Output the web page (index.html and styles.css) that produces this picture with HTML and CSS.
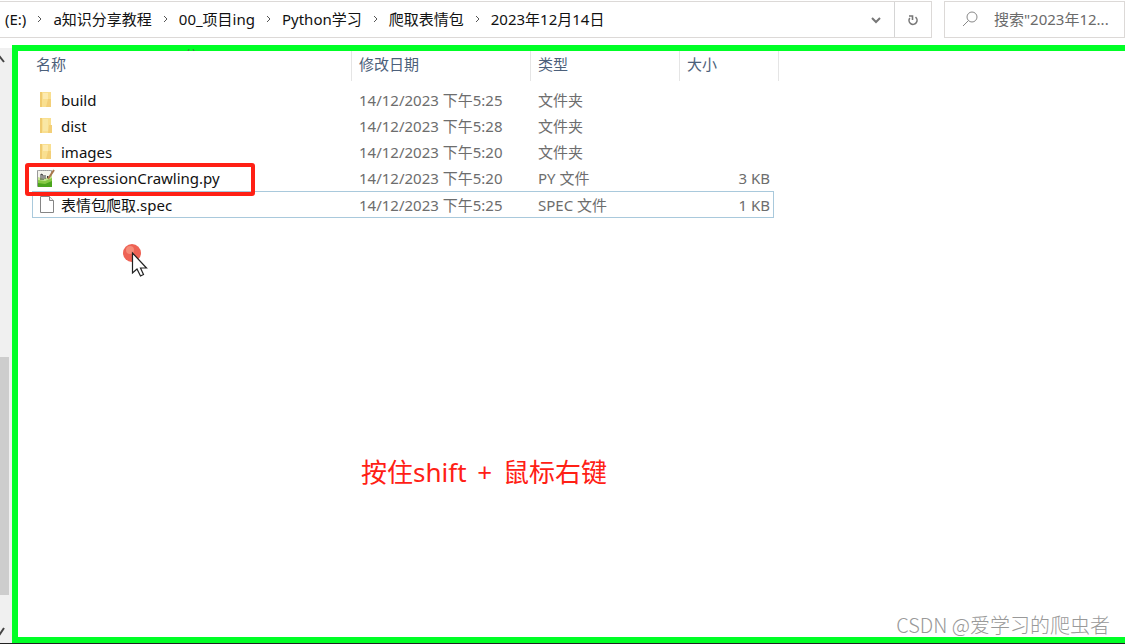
FILE: index.html
```html
<!DOCTYPE html>
<html lang="zh-CN">
<head>
<meta charset="utf-8">
<title>2023年12月14日</title>
<link rel="stylesheet" href="styles.css">
</head>
<body>
<div class="explorer">
  <header class="toolbar">
    <div class="address">
      <nav class="crumbs" aria-label="路径">
        <a href="#">(E:)</a>
        <svg class="sep" viewBox="0 0 27 12"><path d="M12 3l3 3-3 3"/></svg>
        <a href="#">a知识分享教程</a>
        <svg class="sep" viewBox="0 0 27 12"><path d="M12 3l3 3-3 3"/></svg>
        <a href="#">00_项目ing</a>
        <svg class="sep" viewBox="0 0 27 12"><path d="M12 3l3 3-3 3"/></svg>
        <a href="#">Python学习</a>
        <svg class="sep" viewBox="0 0 27 12"><path d="M12 3l3 3-3 3"/></svg>
        <a href="#">爬取表情包</a>
        <svg class="sep" viewBox="0 0 27 12"><path d="M12 3l3 3-3 3"/></svg>
        <a href="#">2023年12月14日</a>
      </nav>
      <button class="tool history" aria-label="以前的位置"><svg viewBox="0 0 12 12"><path d="M2 4l4 4 4-4"/></svg></button>
      <button class="tool refresh" aria-label="刷新"><svg viewBox="0 0 14 14"><path d="M9.500 4.200A4 4 0 1 1 3.800 5M3 3h3.500v4"/></svg></button>
    </div>
    <label class="search">
      <svg viewBox="0 0 16 16"><circle cx="10" cy="6" r="5"/><path d="M6.500 9.500L1 15"/></svg>
      <input type="text" aria-label="搜索" placeholder="搜索&quot;2023年12...">
    </label>
  </header>
  <div class="body">
    <div class="scrollbar">
      <svg class="arrow" viewBox="0 0 9 12"><path d="M-4 8l4-4 4 5"/></svg>
      <div class="thumb"></div>
      <svg class="arrow" viewBox="0 0 9 12"><path d="M-4 4l4 4 4-6"/></svg>
    </div>
    <main class="pane">
      <svg class="sort" viewBox="0 0 8 4"><path d="M1 3l1-2M6 1l1 2"/></svg>
      <table class="files">
        <colgroup><col class="c-name"><col class="c-date"><col class="c-type"><col class="c-size"><col class="c-end"></colgroup>
        <thead>
          <tr><th>名称</th><th>修改日期</th><th>类型</th><th class="last">大小</th><th></th></tr>
        </thead>
        <tbody>
          <tr>
            <td class="name"><span><svg class="icon" viewBox="0 0 20 20"><path fill="#f9df90" d="M4 2h11v15H4z"/><path fill="#f0cb70" d="M4 2h2v15H4z"/><path fill="#fdeab0" d="M7 3h5v6H7z"/><path fill="#f3cf78" d="M12 9h3v8h-5z"/></svg>build</span></td>
            <td>14/12/2023 下午5:25</td><td>文件夹</td><td></td><td></td>
          </tr>
          <tr>
            <td class="name"><span><svg class="icon" viewBox="0 0 20 20"><path fill="#f9df90" d="M4 2h11v15H4z"/><path fill="#f0cb70" d="M4 2h2v15H4z"/><path fill="#f9e7a5" d="M7 3h5v12H7z"/><path fill="#f3cf78" d="M13 9h3v8h-4z"/></svg>dist</span></td>
            <td>14/12/2023 下午5:28</td><td>文件夹</td><td></td><td></td>
          </tr>
          <tr>
            <td class="name"><span><svg class="icon" viewBox="0 0 20 20"><path fill="#f9df90" d="M4 2h11v15H4z"/><path fill="#f0cb70" d="M4 2h2v15H4z"/><path fill="#fdeab0" d="M7 3h5v6H7z"/><path fill="#f3cf78" d="M12 9h3v8h-5z"/></svg>images</span></td>
            <td>14/12/2023 下午5:20</td><td>文件夹</td><td></td><td></td>
          </tr>
          <tr class="marked">
            <td class="name"><span><svg class="icon" viewBox="0 0 20 20"><path fill="#f4f4ec" stroke="#999" d="M1.500 2.500h14v16h-14z"/><path fill="#c3e592" d="M2 9l6 2 8-4v7H2z"/><path fill="#86c943" d="M2 12l7 1 7-3v8H2z"/><path fill="#4ba51d" d="M2 15l7 1 7-3v6H2z"/><path fill="none" stroke="#333" d="M5 12V6l2 1v5M9 7v4M11.500 8v2M13 8v2"/><path stroke="#a9774b" stroke-width="2" d="M12 11l6-9"/><path stroke="#aaa" stroke-dasharray="1 1" d="M2 2.500h14"/></svg>expressionCrawling.py</span></td>
            <td>14/12/2023 下午5:20</td><td>PY 文件</td><td class="size">3 KB</td><td></td>
          </tr>
          <tr class="selected">
            <td class="name"><span><svg class="icon" viewBox="0 0 20 20"><path fill="#fff" stroke="#858585" d="M4.500 1.500h9l4 4v12h-13z"/><path fill="#eee" stroke="#858585" d="M13.500 1.500v4h4"/></svg>表情包爬取.spec</span></td>
            <td>14/12/2023 下午5:25</td><td>SPEC 文件</td><td class="size">1 KB</td><td></td>
          </tr>
        </tbody>
      </table>
      <svg class="pointer" viewBox="0 0 26 36"><circle cx="10" cy="10" r="9" fill="#ee6254"/><circle cx="8" cy="7" r="4" fill="#f58b78"/><path fill="#fff" stroke="#222" stroke-width="1.200" d="M10.500 10v20l4.500-4 3.500 7 3-1.500-3-6.500h6z"/></svg>
      <p class="note">按住shift <span>+</span> 鼠标右键</p>
      <p class="watermark">CSDN @爱学习的爬虫者</p>
    </main>
  </div>
</div>
</body>
</html>
```

FILE: styles.css
```css
*, *::before, *::after { box-sizing: border-box; }

body {
  margin: 0;
  font: 15px/20px "Noto Sans", "Noto Sans CJK SC", sans-serif;
  color: #111;
  background: #fff;
}

.explorer {
  display: flex;
  flex-direction: column;
  height: 100vh;
  border-bottom: 1px solid #222;
  overflow: hidden;
}

.toolbar {
  display: flex;
  gap: 12px;
  height: 45px;
  padding: 1px 0 7px;
}

.address {
  display: flex;
  flex: 1;
  border: 1px solid #dcd9d7;
  border-left: 0;
}

.crumbs {
  display: flex;
  flex: 1;
  align-items: center;
  padding: 0 0 2px 5px;
  white-space: nowrap;
}

.crumbs a {
  color: #111;
  text-decoration: none;
}

svg {
  fill: none;
  stroke-width: 1;
}

.sep {
  width: 27px;
  height: 12px;
  stroke: #555;
}

.tool {
  display: flex;
  align-items: center;
  justify-content: center;
  width: 36px;
  padding: 0;
  border: 0;
  background: none;
}

.tool svg {
  width: 14px;
  stroke: #777;
  stroke-width: 2;
}

.history svg { width: 12px; }

.refresh {
  width: 37px;
  border-left: 1px solid #d5d5d5;
}

.refresh svg { stroke-width: 1.6; }

.search {
  display: flex;
  align-items: center;
  gap: 16px;
  width: 181px;
  padding: 0 0 2px 17px;
  border: 1px solid #dcd9d7;
}

.search svg {
  flex: none;
  width: 16px;
  stroke: #888;
}

.search input {
  flex: 1;
  min-width: 0;
  padding: 0;
  border: 0;
  outline: 0;
  font: inherit;
  background: none;
}

.search input::placeholder { color: #6a6a6a; }

.body {
  display: flex;
  flex: 1;
  min-height: 0;
}

.scrollbar {
  display: grid;
  grid-template-rows: 309px 1fr 48px;
  width: 12px;
  padding-right: 3px;
  border-top: 3px solid #fff;
  background: #f0f0f0;
}

.thumb { background: #cdcdcd; }

.arrow {
  width: 9px;
  height: 12px;
  margin: 5px 0;
  stroke: #444;
  stroke-width: 2;
}

.arrow:last-child { align-self: end; }

.pane {
  position: relative;
  flex: 1;
  min-width: 0;
  padding-left: 14px;
  border: 6px solid #00ff26;
  border-right: 0;
}

.sort {
  position: absolute;
  top: -3px;
  left: 169px;
  width: 8px;
  height: 4px;
  stroke: #457545;
}

.files {
  width: 747px;
  table-layout: fixed;
  border-collapse: separate;
  border-spacing: 0;
  color: #6d6d6d;
}

.c-name { width: 320px; }
.c-date { width: 179px; }
.c-type { width: 149px; }
.c-size { width: 94px; }
.c-end { width: 5px; }

.files th {
  height: 30px;
  padding: 0 0 4px 7px;
  border-right: 1px solid #e5e5e5;
  font-weight: 400;
  text-align: left;
  color: #4c607a;
}

.files th:first-child { padding-left: 4px; }
.files th.last { border-right: 0; }
.files th:last-child { padding: 0; border-right: 1px solid #e5e5e5; }
.files thead::after {
  content: "";
  display: block;
  height: 6px;
}

.files td {
  height: 26px;
  padding: 0 0 0 7px;
  white-space: nowrap;
}

.files td:last-child { padding: 0; }

.files td.name {
  padding-left: 4px;
  color: #111;
}

.name span {
  display: flex;
  align-items: center;
  gap: 5px;
}

.icon {
  width: 20px;
  height: 20px;
}

.files td.size {
  padding: 0 4px 0 0;
  text-align: right;
}

.marked .name { position: relative; }

.marked .name::after {
  content: "";
  position: absolute;
  top: -2px;
  left: -7px;
  z-index: 1;
  width: 230px;
  height: 33px;
  border: 4px solid #ff2015;
  border-radius: 3px;
}

.selected td:not(:last-child) {
  height: 27px;
  border: solid #a9c9dc;
  border-width: 1px 0;
}

.selected td:first-child { box-shadow: inset 1px 0 #a9c9dc; }
.selected td.size { box-shadow: inset -1px 0 #a9c9dc; }

.pointer {
  position: absolute;
  top: 192px;
  left: 104px;
  width: 26px;
  height: 36px;
}

.note {
  position: absolute;
  top: 403px;
  left: 343px;
  margin: 0;
  font-size: 26px;
  line-height: 36px;
  color: #ff2015;
}

.note span { margin: 0 4px; }

.watermark {
  position: absolute;
  right: 15px;
  bottom: -2px;
  margin: 0;
  font: 20px/28px "Noto Sans CJK SC", sans-serif;
  font-weight: 300;
  color: #999;
}
```
